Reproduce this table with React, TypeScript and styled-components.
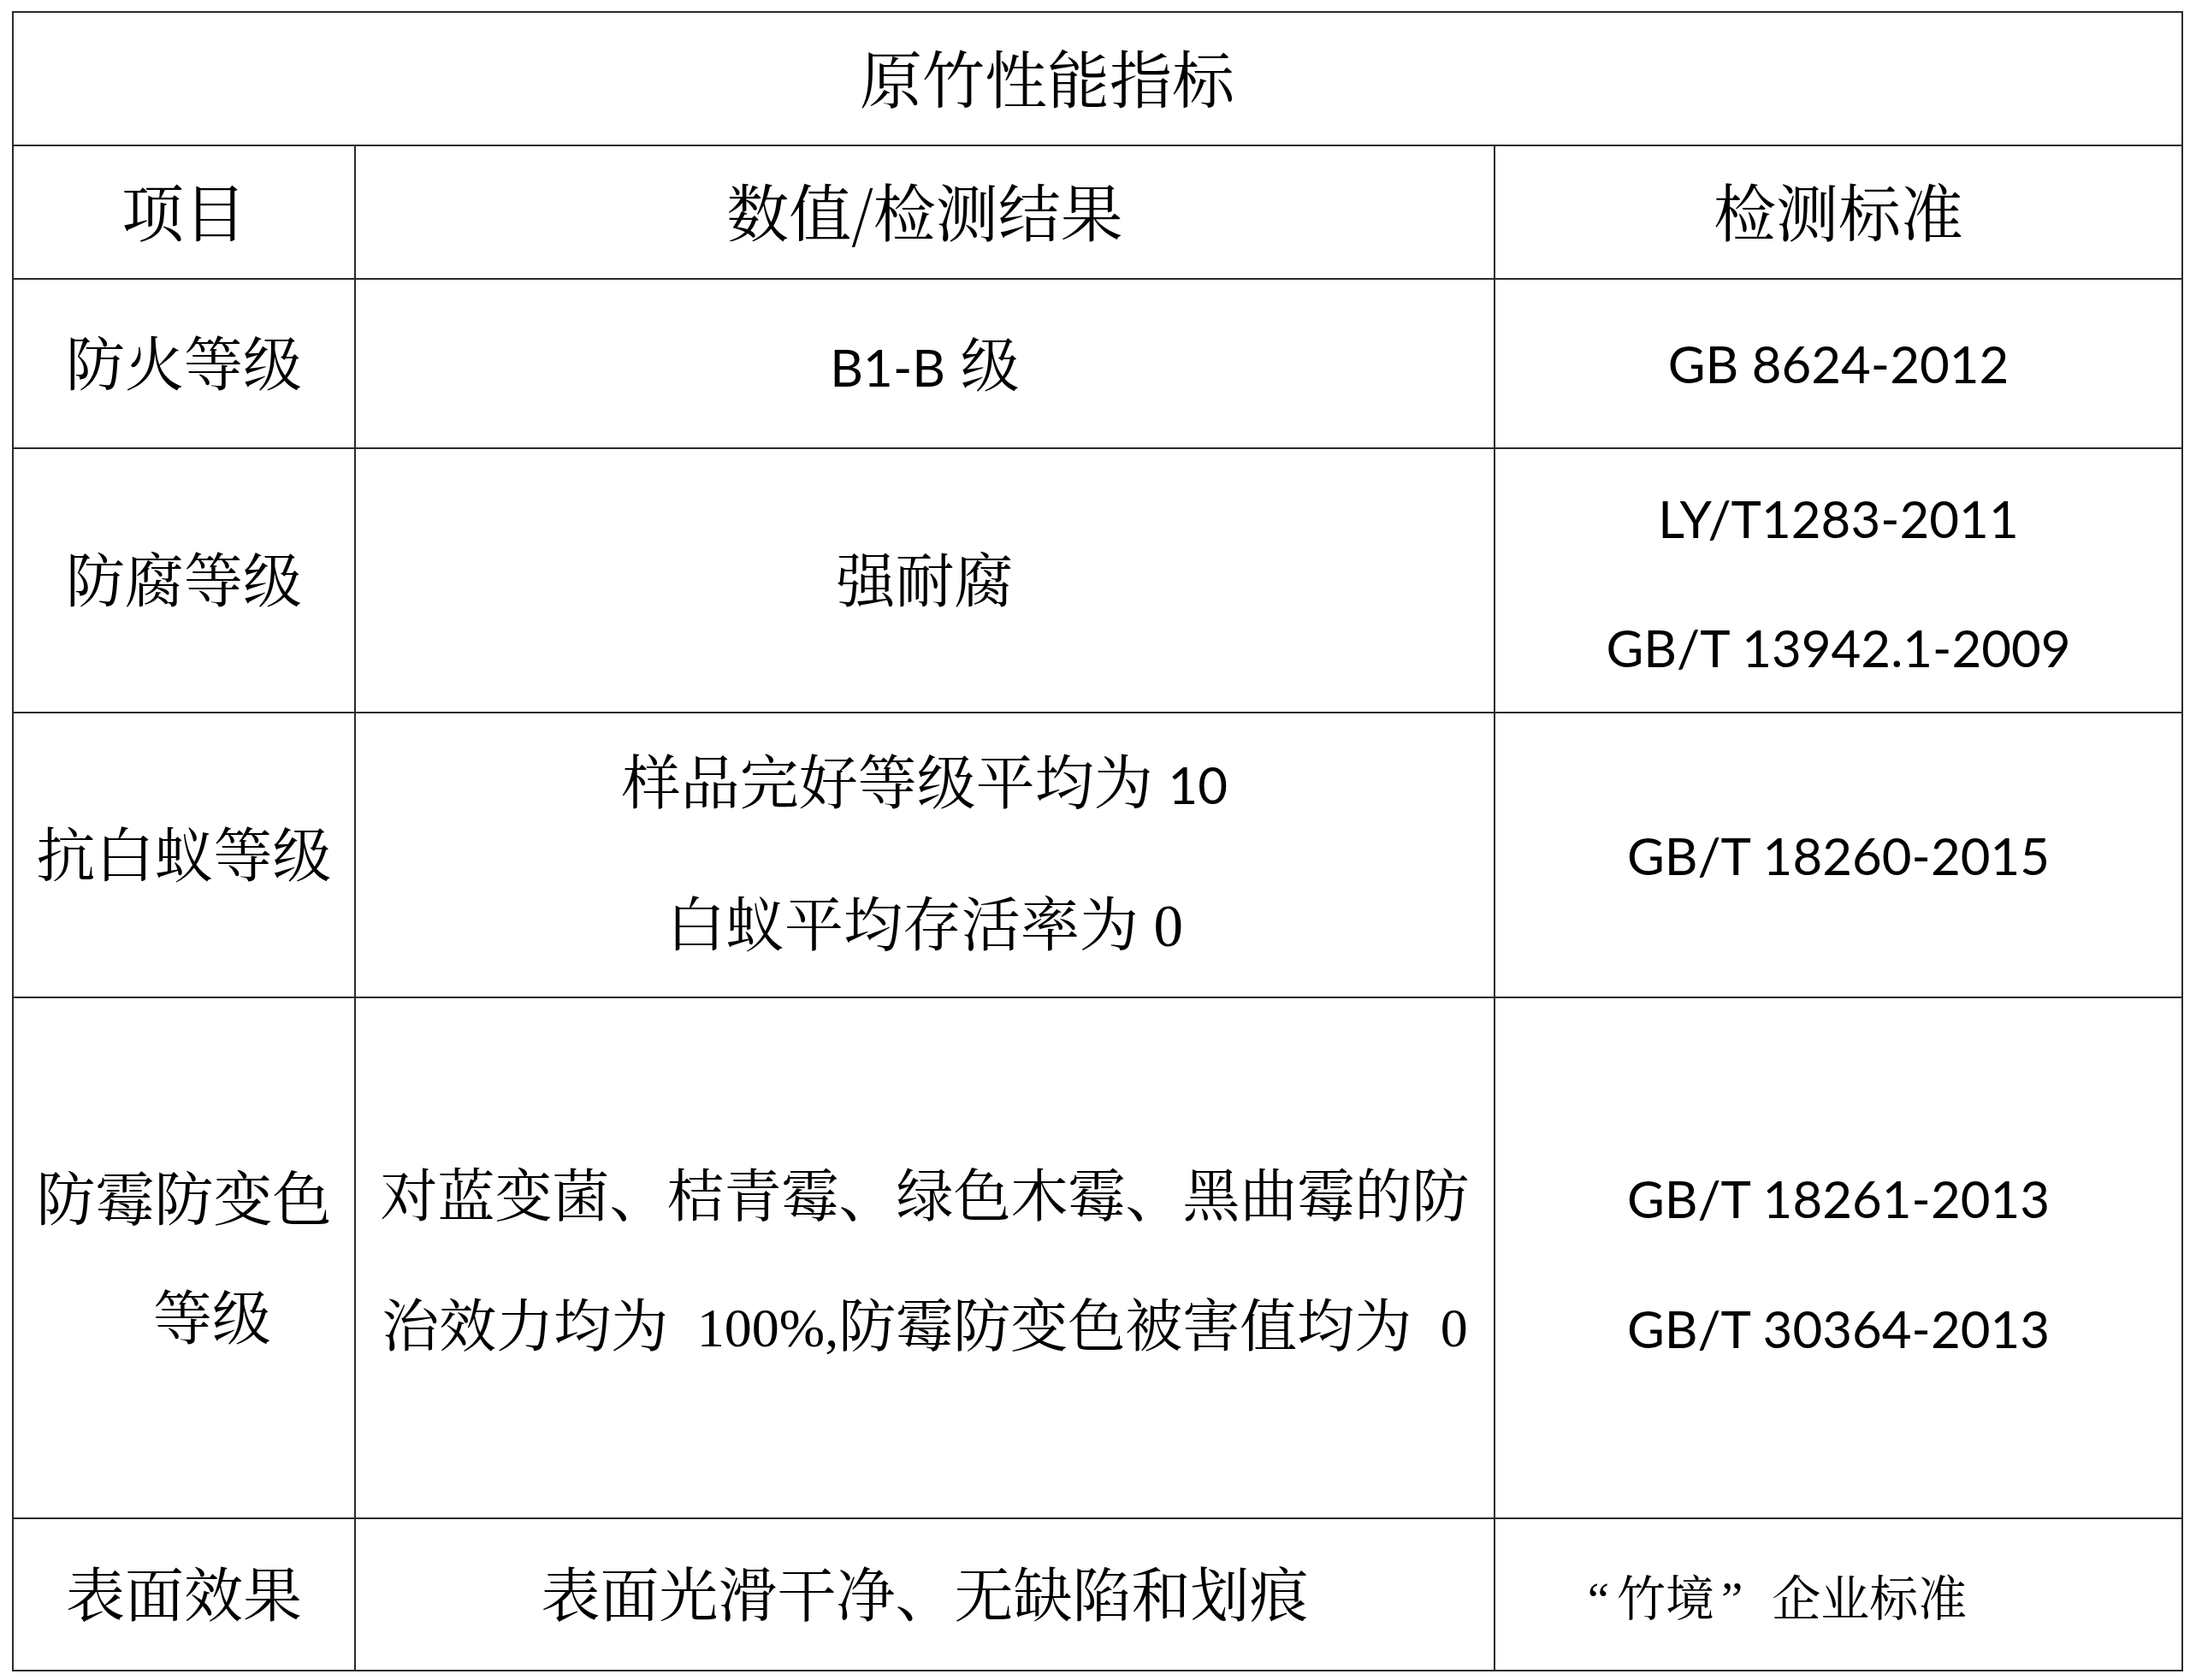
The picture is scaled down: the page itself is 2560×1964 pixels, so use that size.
import React from "react";
import styled, { createGlobalStyle } from "styled-components";

const CJK = `"Noto Serif CJK SC", "Noto Sans CJK SC", serif`;
const LINE = "#2a2a2a";

const GlobalStyle = createGlobalStyle`
  html, body {
    margin: 0;
    padding: 0;
    background: #fff;
  }
  body {
    font-family: ${CJK};
    color: #000;
  }
`;

const Sheet = styled.div`
  display: grid;
  grid-template-columns: 400px 1332px 804px;
  grid-template-rows: 156px 156px 198px 309px 333px 609px 178px;
  width: max-content;
  margin: 13px 0 0 14px;
  border-top: 2px solid ${LINE};
  border-left: 2px solid ${LINE};
`;

const Cell = styled.div<{
  $span?: number;
  $size?: number;
  $padR?: number;
  $lift?: number;
}>`
  grid-column: span ${(p) => p.$span || 1};
  box-sizing: border-box;
  border-right: 2px solid ${LINE};
  border-bottom: 2px solid ${LINE};
  display: flex;
  flex-direction: column;
  align-items: center;
  justify-content: center;
  padding: 0 ${(p) => p.$padR || 0}px ${(p) => (p.$lift === undefined ? 8 : p.$lift)}px 0;
  font-family: ${CJK};
  font-size: ${(p) => p.$size || 69}px;
  white-space: nowrap;
`;

const Line = styled.div<{ $h?: number; $padL?: number }>`
  line-height: ${(p) => (p.$h ? `${p.$h}px` : "1.2")};
  padding-left: ${(p) => p.$padL || 0}px;
`;

const Latin = styled.span<{ $size?: number }>`
  font-family: Lato, "Liberation Sans", sans-serif;
  font-size: ${(p) => p.$size || 60}px;
  line-height: 1;
`;

const Roman = styled.span<{ $size?: number }>`
  font-family: "Liberation Serif", serif;
  font-size: ${(p) => (p.$size ? `${p.$size}px` : "inherit")};
  line-height: 1;
`;

const Quote = styled(Roman)<{ $before?: number; $after?: number }>`
  margin: 0 ${(p) => p.$after || 0}px 0 ${(p) => p.$before || 0}px;
`;

export default function App() {
  return (
    <>
      <GlobalStyle />
      <Sheet>
        <Cell $span={3} $size={73} $padR={118}>
          原竹性能指标
        </Cell>

        <Cell $size={73}>项目</Cell>
        <Cell $size={73}>数值/检测结果</Cell>
        <Cell $size={73}>检测标准</Cell>

        <Cell>防火等级</Cell>
        <Cell $lift={4}>
          <Line>
            <Latin>B1-B</Latin> 级
          </Line>
        </Cell>
        <Cell $lift={0}>
          <Latin>GB 8624-2012</Latin>
        </Cell>

        <Cell>防腐等级</Cell>
        <Cell>强耐腐</Cell>
        <Cell $lift={8}>
          <Line $h={151}>
            <Latin>LY/T1283-2011</Latin>
          </Line>
          <Line $h={151}>
            <Latin>GB/T 13942.1-2009</Latin>
          </Line>
        </Cell>

        <Cell>抗白蚁等级</Cell>
        <Cell $lift={12}>
          <Line $h={166}>
            样品完好等级平均为 <Latin>10</Latin>
          </Line>
          <Line $h={166}>
            白蚁平均存活率为 <Roman>0</Roman>
          </Line>
        </Cell>
        <Cell $lift={0}>
          <Latin>GB/T 18260-2015</Latin>
        </Cell>

        <Cell>
          <Line $h={139}>防霉防变色</Line>
          <Line $h={139} $padL={66}>
            等级
          </Line>
        </Cell>
        <Cell $size={67} $lift={4}>
          <Line $h={152}>对蓝变菌、桔青霉、绿色木霉、黑曲霉的防</Line>
          <Line $h={152}>
            治效力均为{"\u2002"}
            <Roman $size={64}>100%,</Roman>防霉防变色被害值均为{"\u2002"}
            <Roman $size={64}>0</Roman>
          </Line>
        </Cell>
        <Cell $lift={0}>
          <Line $h={152}>
            <Latin>GB/T 18261-2013</Latin>
          </Line>
          <Line $h={152}>
            <Latin>GB/T 30364-2013</Latin>
          </Line>
        </Cell>

        <Cell>表面效果</Cell>
        <Cell>表面光滑干净、无缺陷和划痕</Cell>
        <Cell $size={57} $padR={143} $lift={0}>
          <Line>
            <Quote $after={9}>“</Quote>竹境<Quote $before={8} $after={34}>”</Quote>企业标准
          </Line>
        </Cell>
      </Sheet>
    </>
  );
}
